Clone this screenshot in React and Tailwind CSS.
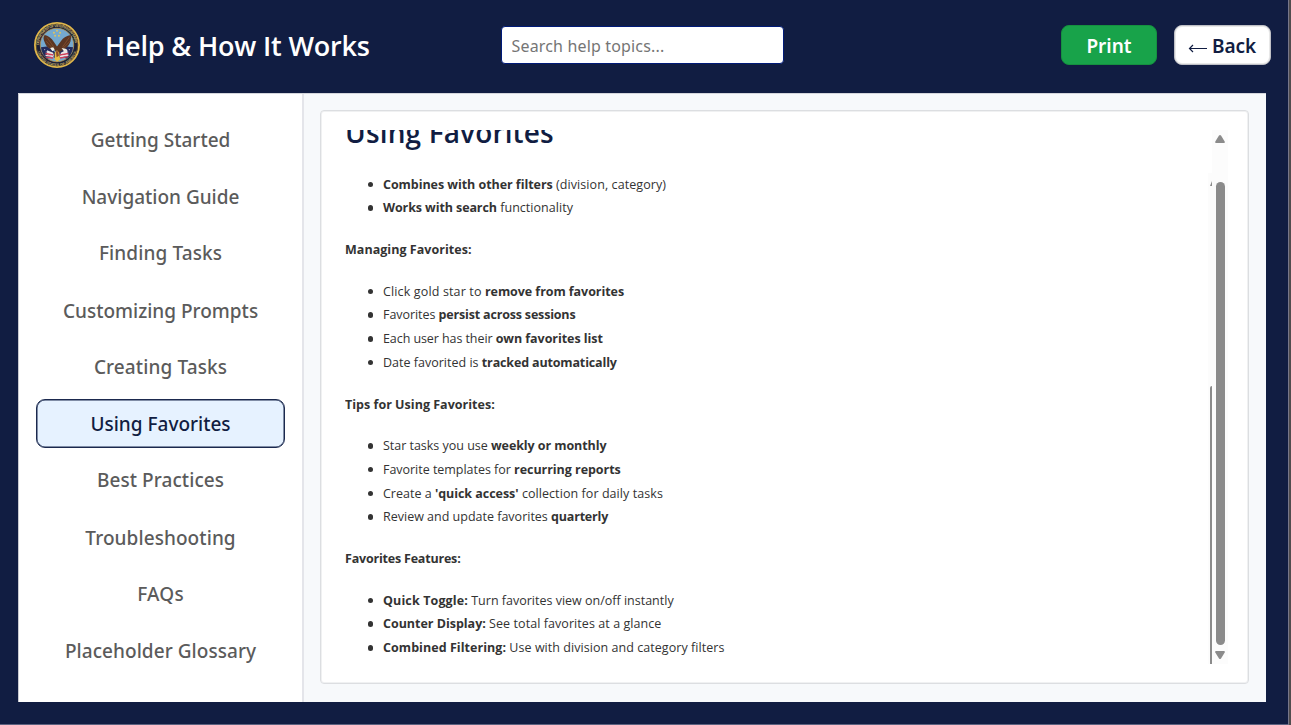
import React from "react";

const navItems = [
  { label: "Getting Started", fit: "tracking-[0px] pt-[2px]" },
  { label: "Navigation Guide", fit: "tracking-[0px] pt-[3px]" },
  { label: "Finding Tasks", fit: "tracking-[0.12px]" },
  { label: "Customizing Prompts", fit: "tracking-[0px] pt-[3px]" },
  { label: "Creating Tasks", fit: "tracking-[0.12px] pt-[2px]" },
  { label: "Using Favorites", fit: "tracking-[0px] pt-[2px]", active: true },
  { label: "Best Practices", fit: "tracking-[0.08px]" },
  { label: "Troubleshooting", fit: "tracking-[0.08px] pt-[3px]" },
  { label: "FAQs", fit: "tracking-[0.2px] pt-[2px]" },
  { label: "Placeholder Glossary", fit: "tracking-[0.06px] pt-[2px]" },
];

const sections = [
  {
    items: [
      [["b", "Combines with other filters", "tracking-[-0.05px]"], ["n", " (division, category)", "tracking-[0.08px]"]],
      [["b", "Works with search", "tracking-[-0.1px]"], ["n", " functionality", "tracking-[0.04px]"]],
    ],
  },
  {
    title: "Managing Favorites:",
    fit: "tracking-[0.04px]",
    items: [
      [["n", "Click gold star to ", "tracking-[0.14px]"], ["b", "remove from favorites", "tracking-[-0.06px]"]],
      [["n", "Favorites ", "tracking-[-0.05px]"], ["b", "persist across sessions", "tracking-[-0.18px]"]],
      [["n", "Each user has their ", "tracking-[-0.08px]"], ["b", "own favorites list", "tracking-[-0.06px]"]],
      [["n", "Date favorited is ", "tracking-[0.01px]"], ["b", "tracked automatically", "tracking-[-0.15px]"]],
    ],
  },
  {
    title: "Tips for Using Favorites:",
    fit: "tracking-[0.02px]",
    items: [
      [["n", "Star tasks you use ", "tracking-[-0.02px]"], ["b", "weekly or monthly", "tracking-[-0.08px]"]],
      [["n", "Favorite templates for ", "tracking-[-0.03px]"], ["b", "recurring reports", "tracking-[-0.04px]"]],
      [["n", "Create a ", "tracking-[0px]"], ["b", "'quick access'", "tracking-[-0.04px]"], ["n", " collection for daily tasks", "tracking-[0.07px]"]],
      [["n", "Review and update favorites ", "tracking-[0px]"], ["b", "quarterly", "tracking-[-0.2px]"]],
    ],
  },
  {
    title: "Favorites Features:",
    fit: "tracking-[-0.2px]",
    items: [
      [["b", "Quick Toggle:", "tracking-[0.13px]"], ["n", " Turn favorites view on/off instantly", "tracking-[0px]"]],
      [["b", "Counter Display:", "tracking-[-0.02px]"], ["n", " See total favorites at a glance", "tracking-[0.07px]"]],
      [["b", "Combined Filtering:", "tracking-[0.05px]"], ["n", " Use with division and category filters", "tracking-[0.05px]"]],
    ],
  },
];

function Seal() {
  return (
    <svg viewBox="0 0 60 60" className="size-[46px] shrink-0">
      <defs>
        <path id="ringTop" d="M6.5 30a23.5 23.5 0 0 1 47 0" />
        <path id="ringBottom" d="M3.5 31a26.5 26.5 0 0 0 53 0" />
      </defs>
      <circle cx="30" cy="30" r="28.8" fill="#1b1f38" stroke="#deb54b" strokeWidth="2.4" />
      <circle cx="30" cy="30" r="27" fill="none" stroke="#7d6428" strokeWidth=".8" />
      <text fill="#c2ab62" fontSize="5" fontWeight="700" fontFamily="Liberation Sans, sans-serif">
        <textPath href="#ringTop" textLength="71">DEPARTMENT OF VETERANS AFFAIRS</textPath>
      </text>
      <text fill="#c2ab62" fontSize="4.6" fontWeight="700" fontFamily="Liberation Sans, sans-serif">
        <textPath href="#ringBottom" startOffset="8" textLength="67">UNITED STATES OF AMERICA</textPath>
      </text>
      <circle cx="30" cy="30" r="21.8" fill="#75a9cf" stroke="#b9934a" strokeWidth="1" />
      <path d="M9 33l8-1 9 6 4 4 4-4 8-6 9 1c-1 7-4 12-9 15l-5-4-7 5-7-5-5 4c-5-3-8-8-9-15z" fill="#232b5b" />
      <path d="M17 37l8 3 1 5-9-2z" fill="#ece7e5" />
      <path d="M43 36l-8 4-1 6 10-3z" fill="#ece7e5" />
      <path d="M15 41l10 2M16 46l9 1M34 43l11-2M34 47l10-2" stroke="#d0415b" strokeWidth="2" fill="none" />
      <path d="M15 43.5l10 1.6M34 45l11-1.8" stroke="#f3dfe2" strokeWidth="1.4" fill="none" />
      <path d="M14 17c4 1 9 4 12 9l4 6 5-7c3-5 8-7 13-8 1 6-1 12-5 16-3 3-6 4-8 5l-4 4-4-5c-6-1-10-4-12-8-2-5-4-8-1-12z" fill="#5b3522" />
      <path d="M17 20l9 13M16 25l8 9M46 20l-9 13M47 25l-9 9" stroke="#7c4a2b" strokeWidth="1.3" />
      <path d="M21 34l4-1 2 3-3 2zM36 34l5 1 3 2-5 1z" fill="#f1efe8" />
      <path d="M27 40l3-3 3 3 1 9-4 3-3-3z" fill="#e6bd42" />
      <path d="M28.5 38l3 0 1 6-3 2z" fill="#8f4a2a" />
      <g fill="#dfc35f">
        <circle cx="30" cy="11.5" r="1.3" />
        <circle cx="26" cy="14" r="1.3" />
        <circle cx="34" cy="14" r="1.3" />
        <circle cx="27.5" cy="18" r="1.3" />
        <circle cx="32.5" cy="18" r="1.3" />
      </g>
      <g fill="#c6bedb">
        <circle cx="14" cy="36" r=".7" />
        <circle cx="16" cy="39" r=".7" />
        <circle cx="46" cy="36" r=".7" />
        <circle cx="44" cy="39" r=".7" />
      </g>
    </svg>
  );
}

function Header() {
  return (
    <header className="flex h-[93px] w-full items-start pl-[34px]">
      <div className="mt-[22px]"><Seal /></div>
      <h1 className="mt-[26px] ml-[25px] w-[396px] whitespace-nowrap text-[27px] leading-[40px] font-semibold tracking-[-0.18px] text-white">Help &amp; How It Works</h1>
      <input
        placeholder="Search help topics..."
        className="mt-[26px] h-[38px] w-[283px] rounded-[4px] border border-[#001a78] bg-white px-[9.5px] pt-[2px] font-['Noto_Sans',sans-serif] text-[16px] tracking-[0.16px] placeholder:text-[#757575]"
      />
      <button className="mt-[25px] ml-[277px] h-[40px] w-[96px] rounded-[8px] border border-[#15913f] bg-[#18a34a] pt-[2px] font-['Noto_Sans',sans-serif] text-[19px] leading-[36px] font-semibold text-white">Print</button>
      <button className="mt-[25px] ml-[17px] flex h-[40px] w-[97px] items-center rounded-[8px] border border-[#bfc0c6] bg-white pl-[13px] font-['Noto_Sans',sans-serif] text-[19px] font-semibold whitespace-nowrap text-[#111d42] shadow-[inset_0_0_0_1px_#e8e8e8]">
        <svg viewBox="0 0 20 12" className="mt-[5px] mr-[4px] h-[12px] w-[20px] shrink-0" fill="none" stroke="currentColor" strokeWidth="1.2">
          <path d="M1.5 6.5H19M5 3L1.5 6.5 5 10" />
        </svg>
        <span className="pt-[2px] tracking-[-0.05px]">Back</span>
      </button>
    </header>
  );
}

export default function App() {
  return (
    <div className="relative flex h-[725px] w-[1291px] flex-col overflow-hidden bg-[#111d42] font-['Open_Sans',sans-serif]">
      <Header />
      <main className="ml-[18px] flex h-[609px] w-[1248px] border-t border-[#d4d6dc] bg-[#f7f9fb]">
        <nav className="flex w-[285.5px] flex-col gap-[7.8px] border-r-2 border-l border-r-[#e4e5ea] border-l-[#c9cad0] bg-white px-[17px] pt-[21.1px]">
          {navItems.map((item) => (
            <button
              key={item.label}
              className={
                "h-[49px] w-[248.5px] shrink-0 rounded-[9px] border-[1.5px] pl-[0.6px] font-['Noto_Sans',sans-serif] text-[19px] leading-[43px] font-medium whitespace-nowrap " +
                item.fit +
                (item.active ? " border-[#1b294e] bg-[#e6f2ff] text-[#111d42] shadow-[inset_0_0_0_0.5px_#1b294e]" : " border-transparent text-[#5b5b5b]")
              }
            >
              {item.label}
            </button>
          ))}
        </nav>
        <section className="mt-[16px] ml-[16.5px] h-[574px] w-[928.5px] rounded-[4px] border border-[#dcdee1] bg-white pt-[19px] pl-[24px] shadow-[inset_0_0_0_1px_#f0f1f2]">
          <div className="relative flex h-[534px] w-[884px] flex-col overflow-hidden">
            <h2 className="-mt-[18px] mb-[20.7px] shrink-0 text-[28px] leading-[40px] font-semibold tracking-[0.14px] text-[#111d42]">Using Favorites</h2>
            <div className="flex flex-col text-[12.5px] leading-[23.74px] text-[#333333]">
              {sections.map((section, index) => (
                <div key={index} className="shrink-0">
                  {section.title && (
                    <h3 className="my-[17.9px] font-bold">
                      <span className={section.fit}>{section.title}</span>
                    </h3>
                  )}
                  <ul className="pl-[38px]">
                    {section.items.map((parts, row) => (
                      <li key={row} className="relative whitespace-nowrap">
                        <span className="absolute top-[9px] -left-[15.5px] size-[5.5px] rounded-full bg-[#333333]" />
                        {parts.map(([kind, text, fit], i) =>
                          kind === "b" ? (
                            <strong key={i} className={"font-bold " + fit}>{text}</strong>
                          ) : (
                            <span key={i} className={fit}>{text}</span>
                          )
                        )}
                      </li>
                    ))}
                  </ul>
                </div>
              ))}
            </div>
            <div className="absolute top-[43px] left-[863px] h-[491px] w-[5px] bg-[#fcfcfc]" />
            <svg className="absolute top-[51px] left-[865px] h-[6px] w-[3px]" viewBox="0 0 3 6"><path d="M0 5L2 0v5z" fill="#8b8b8b" /></svg>
            <div className="absolute top-[256px] left-[865px] h-[278px] w-[2px] rounded-tl-full bg-[#8b8b8b]" />
            <div className="absolute top-0 left-[867px] h-[534px] w-[16px] bg-[#fcfcfc]">
              <svg className="absolute top-[5px] left-[3px] h-[8px] w-[10px]" viewBox="0 0 10 8"><path d="M4 .6Q5-.4 6 .6L9.7 6.4Q10.2 8 9 8H1Q-.2 8 .3 6.4z" fill="#8b8b8b" /></svg>
              <div className="absolute top-[52px] left-[4px] h-[463px] w-[9px] rounded-full bg-[#8b8b8b]" />
              <svg className="absolute top-[521px] left-[3px] h-[8px] w-[10px]" viewBox="0 0 10 8"><path d="M4 7.4Q5 8.4 6 7.4L9.7 1.6Q10.2 0 9 0H1Q-.2 0 .3 1.6z" fill="#8b8b8b" /></svg>
            </div>
          </div>
        </section>
      </main>
      <div className="absolute top-0 right-0 h-[725px] w-[3px] border-l border-[#77778a] bg-[#504c4e]" />
      <div className="absolute bottom-0 left-0 h-px w-[1288px] bg-[#5c6280]" />
    </div>
  );
}
